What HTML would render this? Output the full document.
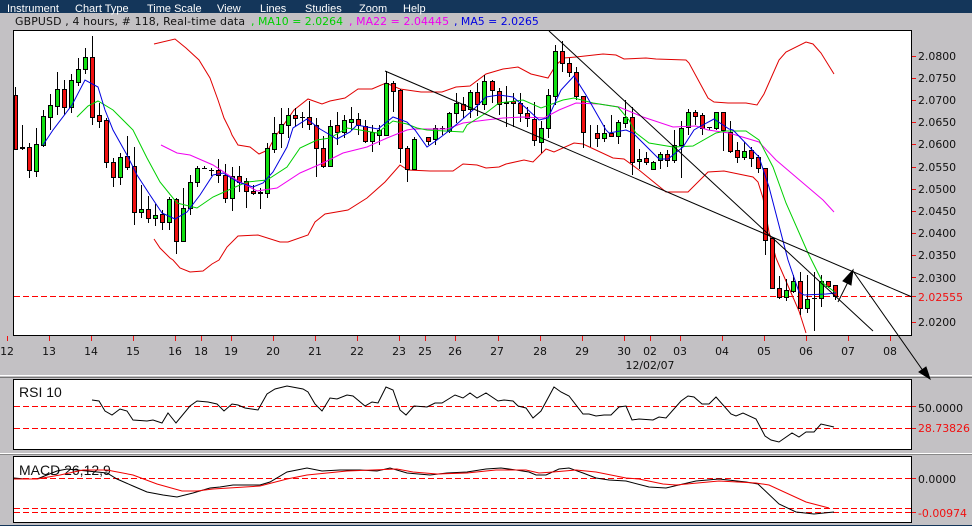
<!DOCTYPE html>
<html><head><meta charset="utf-8"><title>GBPUSD</title>
<style>
html,body{margin:0;padding:0;background:#c3c1c4;width:972px;height:526px;overflow:hidden}
svg{display:block}
.m{font:11px "Liberation Sans",sans-serif;fill:#fff}
.a{font:10.9px "DejaVu Sans",sans-serif;fill:#111}
.r{fill:#f01010}
.c{fill:none;stroke-width:1}
</style></head><body>
<svg width="972" height="526" viewBox="0 0 972 526" xmlns="http://www.w3.org/2000/svg">
<rect width="972" height="526" fill="#c3c1c4"/>
<rect width="972" height="13" fill="#14365a"/>
<g class="m"><text x="7" y="12">Instrument</text><text x="75" y="12">Chart Type</text><text x="147" y="12">Time Scale</text><text x="217" y="12">View</text><text x="260" y="12">Lines</text><text x="305" y="12">Studies</text><text x="359" y="12">Zoom</text><text x="403" y="12">Help</text></g>
<g class="a"><text x="15" y="25" textLength="230">GBPUSD , 4 hours, # 118, Real-time data</text><text x="251" y="25" textLength="92" style="fill:#00d000">, MA10 = 2.0264</text><text x="349" y="25" textLength="100" style="fill:#f000f0">, MA22 = 2.04445</text><text x="454" y="25" style="fill:#0000e0">, MA5 = 2.0265</text></g>

<rect x="13.5" y="30.5" width="898" height="305" fill="#fff" stroke="#000"/>
<rect x="13.5" y="379.5" width="898" height="70" fill="#fff" stroke="#000"/>
<rect x="13.5" y="456.5" width="898" height="66" fill="#fff" stroke="#000"/>
<path d="M0 375.5H972" stroke="#fff"/><path d="M0 377.5H972" stroke="#777"/>
<path d="M0 453.5H972" stroke="#fff"/><path d="M0 454.5H972" stroke="#888"/>
<path d="M0 525.5H972" stroke="#14365a"/>

<!-- dashed -->
<g stroke="#f00" stroke-dasharray="6 3" fill="none">
<path d="M14 296.5H912"/>
<path d="M14 406.5H912"/><path d="M14 428.5H912"/>
<path d="M14 478.5H912"/><path d="M14 508.5H912"/><path d="M14 512.5H912"/>
</g>

<!-- bollinger -->
<path class="c" stroke="#e00000" d="M154 44L175 39L186 48L199 60L210 78L218 100L224 118L230 130L232 135L238 145L250 147L259 154L268 150L275 137L280 130L294 110L308 99L322 104L330 101L345 98L358 89L372 89L386 83L400 89L421 92L442 92L456 87L470 86L486 74L503 69L518 67L531 74L548 78L556 65L564 58L576 57L603 54L616 55L624 59L646 58L656 59L686 60L689 63L708 98L714 102L728 103L746 103L757 105L764 94L779 60L786 52L806 42L813 44L821 53L834 74"/>
<path class="c" stroke="#e00000" d="M154 239L160 248L170 258L173 260L180 268L190 272L203 271L212 264L219 260L227 247L238 236L258 235L280 242L288 242L308 235L315 222L325 214L348 210L367 198L385 182L400 165L408 170L430 171L453 171L463 164L477 165L486 168L499 167L506 164L524 160L533 162L546 149L554 152L574 143L583 144L613 158L624 159L639 170L666 192L688 192L708 172L724 171L753 177L758 182L763 198L769 232L776 258L779 265L799 311L806 333"/>

<!-- wicks -->
<path stroke="#000" fill="none" d="M15.5 87V150M22.5 125V150M29.5 143V178M36.5 128V177M43.5 110V147M50.5 94V130M57.5 72V115M64.5 80V115M71.5 74V113M78.5 58V86M85.5 48V74M92.5 36V125M99.5 103V128M106.5 118V168M113.5 158V187M120.5 153V185M127.5 136V170M134.5 147V225M141.5 185V218M148.5 196V223M155.5 204V226M162.5 210V230M169.5 197V230M176.5 198V254M183.5 188V241M190.5 175V215M197.5 166V187M204.5 166V169M211.5 168V176M218.5 159V183M225.5 164V203M232.5 167V211M239.5 166V192M246.5 178V208M253.5 185V195M260.5 188V209M267.5 143V198M274.5 117V153M281.5 108V148M288.5 108V138M295.5 108V126M302.5 112V128M309.5 101V130M316.5 118V177M323.5 136V168M330.5 120V167M337.5 112V145M344.5 115V138M351.5 107V130M358.5 113V135M365.5 120V143M372.5 125V152M379.5 125V145M386.5 71V135M393.5 81V112M400.5 89V163M407.5 146V182M414.5 137V169M428.5 137V145M435.5 125V145M442.5 126V135M449.5 112V133M456.5 93V123M463.5 97V118M470.5 90V118M477.5 83V116M484.5 75V110M492.5 80V103M499.5 88V115M506.5 86V127M513.5 93V127M520.5 93V122M527.5 107V127M534.5 102V146M541.5 121V153M548.5 89V138M555.5 45V105M562.5 41V72M569.5 58V77M576.5 67V100M583.5 96V148M590.5 125V147M597.5 125V147M604.5 125V142M611.5 115V137M618.5 120V144M625.5 100V128M632.5 107V175M639.5 149V169M646.5 152V165M653.5 161V169M660.5 152V169M667.5 150V167M674.5 130V163M681.5 121V178M688.5 109V135M695.5 110V125M702.5 113V135M709.5 127V130M716.5 112V130M723.5 112V151M730.5 121V153M737.5 142V163M744.5 142V160M751.5 147V167M758.5 155V173M765.5 168V255M772.5 238V288M779.5 276V299M786.5 279V301M793.5 275V293M800.5 272V315M807.5 275V313M814.5 272V331M821.5 275V307M828.5 281V288M835.5 285V300"/>
<!-- red bodies -->
<path stroke="#000" fill="#f01010" d="M14.5 95.5h3V149.5h-3zM20.5 147.5h4V148.5h-4zM27.5 147.5h4V170.5h-4zM62.5 89.5h4V107.5h-4zM90.5 57.5h4V117.5h-4zM97.5 115.5h4V121.5h-4zM104.5 120.5h4V162.5h-4zM111.5 162.5h4V177.5h-4zM125.5 156.5h4V167.5h-4zM132.5 166.5h4V212.5h-4zM146.5 209.5h4V218.5h-4zM160.5 214.5h4V222.5h-4zM174.5 199.5h4V241.5h-4zM216.5 170.5h4V175.5h-4zM223.5 175.5h4V198.5h-4zM237.5 176.5h4V182.5h-4zM244.5 181.5h4V191.5h-4zM251.5 191.5h4V193.5h-4zM258.5 192.5h4V193.5h-4zM293.5 115.5h4V118.5h-4zM307.5 117.5h4V124.5h-4zM314.5 125.5h4V148.5h-4zM321.5 148.5h4V166.5h-4zM335.5 125.5h4V132.5h-4zM356.5 119.5h4V125.5h-4zM363.5 126.5h4V141.5h-4zM391.5 83.5h4V91.5h-4zM398.5 90.5h4V148.5h-4zM405.5 148.5h4V169.5h-4zM426.5 137.5h4V141.5h-4zM461.5 104.5h4V110.5h-4zM475.5 92.5h4V104.5h-4zM490.5 81.5h4V90.5h-4zM497.5 91.5h4V104.5h-4zM511.5 101.5h4V103.5h-4zM518.5 103.5h4V113.5h-4zM525.5 113.5h4V118.5h-4zM532.5 119.5h4V140.5h-4zM560.5 51.5h4V63.5h-4zM567.5 63.5h4V72.5h-4zM574.5 72.5h4V96.5h-4zM581.5 96.5h4V132.5h-4zM595.5 133.5h4V138.5h-4zM609.5 133.5h4V136.5h-4zM630.5 117.5h4V162.5h-4zM644.5 158.5h4V162.5h-4zM665.5 154.5h4V160.5h-4zM693.5 112.5h4V116.5h-4zM700.5 115.5h4V128.5h-4zM721.5 112.5h4V130.5h-4zM728.5 132.5h4V151.5h-4zM735.5 150.5h4V157.5h-4zM749.5 150.5h4V158.5h-4zM756.5 157.5h4V168.5h-4zM763.5 168.5h4V240.5h-4zM770.5 238.5h4V288.5h-4zM777.5 288.5h4V297.5h-4zM798.5 281.5h4V308.5h-4zM826.5 281.5h4V286.5h-4zM833.5 285.5h4V296.5h-4z"/>
<!-- green bodies -->
<path stroke="#000" fill="#10e010" d="M34.5 144.5h4V171.5h-4zM41.5 116.5h4V145.5h-4zM48.5 105.5h4V117.5h-4zM55.5 89.5h4V106.5h-4zM69.5 80.5h4V107.5h-4zM76.5 69.5h4V82.5h-4zM83.5 57.5h4V69.5h-4zM118.5 157.5h4V177.5h-4zM139.5 209.5h4V212.5h-4zM153.5 215.5h4V218.5h-4zM167.5 199.5h4V222.5h-4zM181.5 208.5h4V241.5h-4zM188.5 182.5h4V208.5h-4zM195.5 168.5h4V182.5h-4zM230.5 176.5h4V198.5h-4zM265.5 148.5h4V193.5h-4zM272.5 133.5h4V149.5h-4zM279.5 124.5h4V133.5h-4zM286.5 115.5h4V125.5h-4zM328.5 126.5h4V166.5h-4zM342.5 120.5h4V132.5h-4zM349.5 119.5h4V122.5h-4zM370.5 132.5h4V141.5h-4zM377.5 130.5h4V135.5h-4zM384.5 83.5h4V135.5h-4zM412.5 139.5h4V169.5h-4zM433.5 128.5h4V139.5h-4zM447.5 113.5h4V131.5h-4zM454.5 103.5h4V113.5h-4zM468.5 92.5h4V109.5h-4zM482.5 81.5h4V104.5h-4zM504.5 102.5h4V103.5h-4zM539.5 128.5h4V142.5h-4zM546.5 95.5h4V128.5h-4zM553.5 51.5h4V96.5h-4zM602.5 133.5h4V138.5h-4zM616.5 122.5h4V136.5h-4zM623.5 117.5h4V123.5h-4zM637.5 159.5h4V161.5h-4zM651.5 162.5h4V169.5h-4zM658.5 154.5h4V160.5h-4zM672.5 145.5h4V160.5h-4zM679.5 128.5h4V145.5h-4zM686.5 112.5h4V127.5h-4zM714.5 112.5h4V128.5h-4zM742.5 151.5h4V157.5h-4zM784.5 290.5h4V297.5h-4zM791.5 281.5h4V291.5h-4zM805.5 299.5h4V308.5h-4zM819.5 281.5h4V298.5h-4z"/>
<!-- dashes -->
<path stroke="#000" d="M202 168.5h5M209 170.5h5M300 117.5h5M440 128.5h5M707 127.5h5M812 298.5h5"/>

<!-- MAs -->
<path class="c" stroke="#f000f0" d="M161 145L177 153L190 155L213 165L233 178L257 191L277 188L300 173L323 163L343 153L367 147L387 138L407 130L413 129L447 129L463 123L486 120L503 118L523 117L544 118L559 110L576 103L599 104L619 107L643 117L673 127L696 126L708 130L729 133L759 142L776 160L803 183L823 200L834 212"/>
<path class="c" stroke="#00d000" d="M77 117L88 106L98 101L113 110L133 130L147 158L160 182L177 203L197 208L213 197L233 188L247 182L267 180L287 167L300 148L317 140L330 138L347 128L360 130L377 133L393 121L407 124L417 128L427 130L463 132L467 125L486 113L499 103L523 100L541 108L563 100L574 98L593 103L618 107L629 120L634 130L636 133L649 143L673 147L693 146L716 133L726 131L746 131L759 140L773 167L786 203L808 253L814 265L823 283L836 293"/>
<path class="c" stroke="#0000e0" d="M43 145L53 130L72 105L85 80L98 87L105 110L113 130L127 155L137 175L150 195L162 213L175 219L187 212L200 195L213 175L223 173L238 182L253 187L263 183L273 172L287 147L293 128L307 119L320 129L337 139L350 132L357 125L367 127L378 129L393 117L407 122L415 130L427 147L437 140L450 130L473 110L486 97L499 95L513 97L526 108L539 120L548 118L561 90L574 76L586 95L606 130L609 133L626 130L633 133L659 159L668 159L683 147L694 130L699 127L714 119L729 129L733 130L759 157L769 187L788 260L799 292L804 295L826 294L836 293"/>

<!-- trend lines -->
<g stroke="#000" fill="none">
<path d="M385 71L912 297"/>
<path d="M549 31L873 331"/>
<path d="M853 271L926 375"/>
<path d="M838 302L849 280"/>
</g>
<path d="M853 270L843 281L851 285Z" fill="#000" stroke="#000"/>
<path d="M930 379L919 372L926 367Z" fill="#000" stroke="#000"/>

<!-- y ticks -->
<path stroke="#f01010" d="M912 56.5h4M912 78.5h4M912 100.5h4M912 122.5h4M912 144.5h4M912 167.5h4M912 189.5h4M912 211.5h4M912 233.5h4M912 255.5h4M912 277.5h4M912 296.5h4M912 322.5h4M912 406.5h4M912 428.5h4M912 478.5h4M912 512.5h4"/>
<g class="a">
<text x="918" y="60">2.0800</text><text x="918" y="82">2.0750</text><text x="918" y="104">2.0700</text><text x="918" y="126">2.0650</text><text x="918" y="148">2.0600</text><text x="918" y="171">2.0550</text><text x="918" y="193">2.0500</text><text x="918" y="215">2.0450</text><text x="918" y="237">2.0400</text><text x="918" y="259">2.0350</text><text x="918" y="282">2.0300</text><text x="918" y="326">2.0200</text>
<text x="918" y="301" class="r">2.02555</text>
<text x="918" y="412">50.0000</text><text x="918" y="432" class="r">28.73826</text>
<text x="918" y="483">0.0000</text><text x="918" y="517" class="r">-0.00974</text>
</g>
<!-- x ticks -->
<path stroke="#f01010" d="M7.5 336v5M49.5 336v5M91.5 336v5M133.5 336v5M175.5 336v5M201.5 336v5M231.5 336v5M273.5 336v5M315.5 336v5M357.5 336v5M399.5 336v5M425.5 336v5M455.5 336v5M498.5 336v5M540.5 336v5M582.5 336v5M624.5 336v5M650.5 336v5M680.5 336v5M722.5 336v5M764.5 336v5M806.5 336v5M848.5 336v5M890.5 336v5"/>
<g class="a" text-anchor="middle">
<text x="7" y="355">12</text><text x="49" y="355">13</text><text x="91" y="355">14</text><text x="133" y="355">15</text><text x="175" y="355">16</text><text x="201" y="355">18</text><text x="231" y="355">19</text><text x="273" y="355">20</text><text x="315" y="355">21</text><text x="357" y="355">22</text><text x="399" y="355">23</text><text x="425" y="355">25</text><text x="455" y="355">26</text><text x="497" y="355">27</text><text x="540" y="355">28</text><text x="582" y="355">29</text><text x="624" y="355">30</text><text x="650" y="355">02</text><text x="680" y="355">03</text><text x="722" y="355">04</text><text x="764" y="355">05</text><text x="806" y="355">06</text><text x="848" y="355">07</text><text x="890" y="355">08</text>
<text x="650" y="369">12/02/07</text>
</g>

<!-- RSI -->
<path class="c" stroke="#000" d="M92 400L99 401L105 411L112 415L120 409L127 411L133 420L147 421L153 420L162 423L168 413L176 423L190 406L197 401L208 402L217 404L224 411L232 404L238 405L245 408L258 410L267 394L275 389L287 386L303 389L308 392L315 404L322 411L330 398L337 399L347 395L353 396L365 406L372 402L378 403L386 387L393 390L400 410L406 415L414 406L427 407L435 403L442 403L455 395L463 398L470 393L477 398L486 393L498 401L504 400L513 401L518 406L526 408L533 418L541 411L554 387L561 392L569 396L583 414L589 414L596 416L604 415L611 415L619 407L626 406L632 420L639 419L653 420L659 417L666 418L681 401L688 396L694 397L702 404L709 404L716 397L731 414L736 416L743 413L756 419L765 436L771 440L779 442L792 433L799 437L806 432L814 432L821 424L834 427"/>
<text x="19" y="397" font-family="Liberation Sans, sans-serif" font-size="14" fill="#111">RSI 10</text>
<!-- MACD -->
<text x="19" y="475" font-family="Liberation Sans, sans-serif" font-size="14" fill="#111">MACD 26,12,9</text>
<path class="c" stroke="#000" d="M14 478L25 479L37 479L47 475L57 471L67 469L87 471L107 473L117 479L133 486L147 492L163 495L177 497L193 493L210 488L220 487L233 485L260 485L270 482L287 472L307 468L322 471L340 470L360 470L377 471L390 468L407 473L430 475L447 473L467 472L486 469L501 468L516 470L529 472L536 475L546 475L559 469L569 468L583 473L596 478L609 480L626 481L649 487L666 488L683 484L696 481L719 479L746 482L758 484L779 504L796 512L814 514L834 512"/>
<path class="c" stroke="#f00000" d="M14 479L37 479L60 475L83 470L107 470L133 475L157 484L182 491L197 491L213 489L260 486L287 479L307 475L347 471L397 469L413 472L437 474L467 473L486 471L496 470L526 470L539 473L553 472L576 470L596 472L626 478L639 479L663 484L676 485L719 481L756 483L769 485L806 502L829 508"/>
</svg>
</body></html>
